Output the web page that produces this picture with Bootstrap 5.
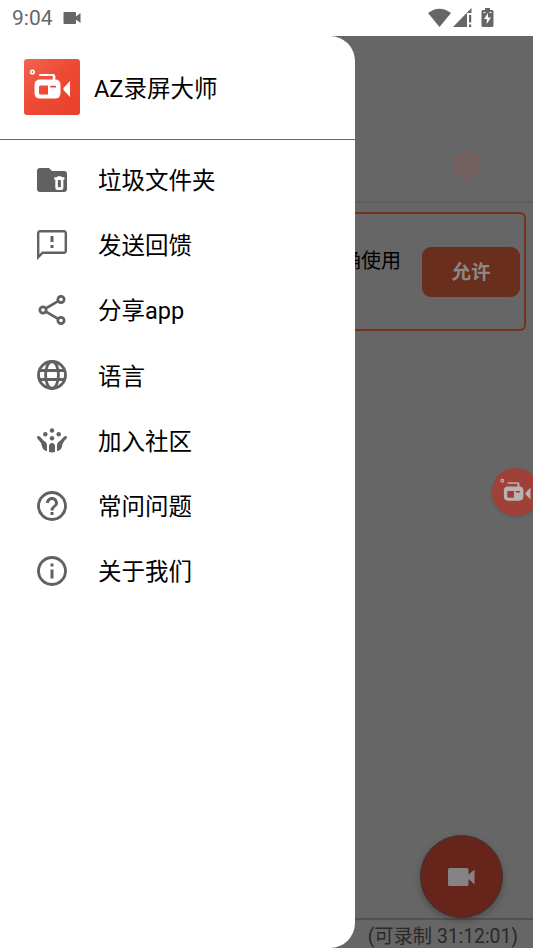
<!DOCTYPE html>
<html lang="zh-CN">
<head>
<meta charset="utf-8">
<meta name="viewport" content="width=device-width, initial-scale=1">
<title>AZ录屏大师</title>
<link href="https://cdn.jsdelivr.net/npm/bootstrap@5.3.0/dist/css/bootstrap.min.css" rel="stylesheet">
<style>
body{font-family:Roboto,"Noto Sans CJK SC",sans-serif;background:#fff;color:#000}
svg{display:block;flex:none}
.screen{height:948px}
.status{height:36px;padding:0 39px 0 12px;color:#666}
.clock{font-size:21px;line-height:38px;width:51px}
.backdrop-page{background:#666}
.topbar{height:167px;padding:112px 49px 0 0;border-bottom:2px solid #5f5f60}
.permit{height:119px;margin:9px 7px 0 12px;padding:0 4px 0 0;border:2px solid #75321e;border-radius:6px}
.permit-text{font-size:20px;line-height:28px;margin:-21px 21px 0 0}
.allow{width:98px;height:50px;border-radius:9px;background:#692e1c;color:#8b8887;font-size:19.5px;font-weight:700;padding:3px 0 0}
.remain{height:30px;border-top:2px solid #525252;color:#292929;font-size:19.3px;line-height:34px;padding-right:15px}
.fab{width:83px;height:83px;right:30px;bottom:30px;background:#66241b;border:1px solid #3d302e;box-shadow:0 3px 7px rgba(0,0,0,.25)}
.bubble{width:48px;height:48px;left:492px;top:432px;padding:3px 0 0 4px;background:#9f4138;box-shadow:0 1px 3px rgba(0,0,0,.15)}
.drawer{width:355px;top:36px;background:#fff;border-radius:0 25px 25px 0}
.brand{height:104px;padding:0 24px 2px;border-bottom:1px solid #666;gap:14px}
.brand-icon{width:56px;height:56px;border-radius:3px;background:linear-gradient(135deg,#f16452,#ed4933 50%,#e9402a)}
.brand-name{font-size:23.5px;line-height:34px;padding-top:4px}
.menu{padding-top:7px}
.entry{height:65.2px;padding:0 0 0 34px;gap:28px;font-size:23.5px;color:#000}
.entry span{padding-top:4px}
.entry svg{width:36px;height:36px;color:#616161}
</style>
</head>
<body>
<svg width="0" height="0" class="position-absolute" aria-hidden="true">
<symbol id="cam" viewBox="0 0 56 56"><circle cx="8.400" cy="13" r="1.800" fill="none" stroke="currentColor" stroke-width="1.600"/><g fill="currentColor"><path d="M15.300 15h14q2 0 2 2v4.500h-2.600V17H15.300z"/><path fill-rule="evenodd" d="M16 20.500h15q5.500 0 5.500 5.500v8q0 5.500-5.500 5.500H16q-5.500 0-5.500-5.500v-8q0-5.500 5.500-5.500zm.5 6q-1.500 0-1.500 1.500v6q0 1.500 1.500 1.500H24v-9zm9.700.3v1.700H32v-1.700z"/><path d="M39.500 29l6.500-7v16l-6.500-7z"/></g></symbol>
</svg>
<div class="screen position-relative overflow-hidden d-flex flex-column">
<header class="status d-flex align-items-center">
<span class="clock">9:04</span>
<svg width="18" height="12" viewBox="0 0 18 12" fill="currentColor"><path d="M1.500 0h10.500q1 0 1 1v3.500L17.500 1v10L13 7.500V11q0 1-1 1H1.500q-1 0-1-1V1q0-1 1-1z"/></svg>
<div class="ms-auto d-flex align-items-center">
<svg width="23" height="20" viewBox="0 0 23 20" fill="currentColor"><path d="M0 5Q11.500-3.500 23 5L11.500 19z"/></svg>
<svg width="20" height="20" viewBox="0 0 20 20" fill="currentColor" style="margin-left:2px"><path d="M0 19L18.500 0v5H14v14zM16 7h2.200v7.500H16zm0 9.500h2.200V19H16z"/></svg>
<svg width="13" height="20" viewBox="0 0 13 20" style="margin-left:8px"><path fill="currentColor" d="M4 0h5v2h2q1.500 0 1.500 1.500v14q0 1.500-1.500 1.500H2Q.5 19 .5 17.500v-14Q.5 2 2 2h2z"/><path fill="#fff" d="M7 5v4.500h3L5.800 16v-5H3z"/><path stroke="#fff" d="M2.500 4.500h2m4 0h2"/></svg>
</div>
</header>
<main class="backdrop-page flex-grow-1 position-relative d-flex flex-column overflow-hidden">
<div class="topbar d-flex justify-content-end">
<svg width="35" height="35" viewBox="0 0 24 24" fill="#7c5c5b"><path d="M19.430 12.980c.04-.32.070-.640.070-.980 0-.340-.030-.660-.070-.980l2.110-1.650c.190-.150.240-.420.120-.640l-2-3.460c-.090-.160-.260-.250-.440-.250-.060 0-.120.010-.170.030l-2.490 1c-.520-.400-1.080-.730-1.690-.980l-.380-2.650C14.460 2.180 14.250 2 14 2h-4c-.250 0-.460.180-.490.420l-.380 2.650c-.610.250-1.170.590-1.690.980l-2.490-1c-.060-.020-.120-.030-.180-.030-.170 0-.340.090-.430.250l-2 3.460c-.130.220-.070.490.120.640l2.110 1.650c-.040.320-.070.650-.070.980 0 .330.030.660.070.980l-2.110 1.650c-.190.150-.240.420-.120.640l2 3.460c.090.160.260.250.440.250.060 0 .120-.010.170-.030l2.490-1c.520.400 1.080.730 1.690.980l.380 2.650c.030.240.240.420.490.420h4c.250 0 .460-.180.490-.420l.380-2.650c.610-.250 1.170-.590 1.690-.980l2.490 1c.060.020.120.030.180.030.170 0 .340-.090.430-.250l2-3.460c.120-.220.070-.490-.120-.640l-2.110-1.650zm-1.980-1.710c.040.310.050.520.050.730 0 .210-.020.430-.050.730l-.140 1.130.890.700 1.080.840-.700 1.210-1.270-.510-1.040-.420-.900.680c-.430.320-.840.560-1.250.730l-1.060.430-.160 1.130-.200 1.350h-1.400l-.190-1.350-.160-1.130-1.060-.430c-.430-.180-.830-.410-1.230-.710l-.910-.700-1.060.430-1.270.510-.700-1.210 1.080-.840.890-.700-.140-1.130c-.030-.310-.050-.540-.050-.740s.020-.430.050-.730l.140-1.130-.890-.700-1.080-.840.700-1.210 1.270.510 1.040.420.900-.680c.430-.320.840-.560 1.250-.730l1.060-.430.160-1.130.200-1.350h1.390l.190 1.350.160 1.130 1.060.430c.430.180.830.410 1.230.710l.910.700 1.060-.430 1.270-.510.700 1.210-1.070.850-.890.700.140 1.130zM12 8c-2.210 0-4 1.790-4 4s1.790 4 4 4 4-1.790 4-4-1.790-4-4-4zm0 6c-1.100 0-2-.9-2-2s.9-2 2-2 2 .9 2 2-.9 2-2 2z"/></svg>
</div>
<section class="permit d-flex align-items-center justify-content-end">
<span class="permit-text">正确使用</span>
<button class="allow btn">允许</button>
</section>
<div class="remain mt-auto text-end">(可录制 31:12:01)</div>
<button class="fab position-absolute rounded-circle d-flex align-items-center justify-content-center p-0" aria-label="录制">
<svg width="27" height="18" viewBox="0 0 27 18" fill="#858383"><path d="M1.500 0H19q1.500 0 1.500 1.500v5.200L26.500 1.500v15L20.500 11v5.500Q20.500 18 19 18H1.500Q0 18 0 16.500v-15Q0 0 1.500 0z"/></svg>
</button>
<div class="bubble position-absolute rounded-circle">
<svg width="42" height="42" color="#b9b3b1"><use href="#cam"/></svg>
</div>
</main>
<aside class="drawer position-absolute start-0 bottom-0 d-flex flex-column">
<div class="brand d-flex align-items-center">
<div class="brand-icon text-white"><svg width="56" height="56"><use href="#cam"/></svg></div>
<span class="brand-name">AZ录屏大师</span>
</div>
<nav class="menu d-flex flex-column">
<a class="entry d-flex align-items-center text-decoration-none"><svg viewBox="0 0 24 24" fill="currentColor"><path fill-rule="evenodd" d="M10 4H4q-2 0-2 2v12q0 2 2 2h16q2 0 2-2V8q0-2-2-2h-8zm3.500 6.200h1.700l.6-.7h2.300l.6.7h1.600v1.500h-.7v5.500q0 1.500-1.500 1.500h-2.400q-1.500 0-1.500-1.500v-5.500h-.7zm2.400 1.800v4.800h2V12z"/></svg><span>垃圾文件夹</span></a>
<a class="entry d-flex align-items-center text-decoration-none"><svg viewBox="0 0 24 24" fill="currentColor"><path d="M20 2H4c-1.100 0-2 .9-2 2v18l4-4h14c1.100 0 2-.9 2-2V4c0-1.100-.9-2-2-2zm.4 14.400H5.400l-1.800 1.800V3.600h16.800zM11 12h2v2h-2zm0-6h2v4h-2z"/></svg><span>发送回馈</span></a>
<a class="entry d-flex align-items-center text-decoration-none"><svg viewBox="0 0 24 24" fill="none" stroke="currentColor" stroke-width="1.800"><circle cx="18" cy="5" r="2.100"/><circle cx="6" cy="12" r="2.100"/><circle cx="18" cy="19" r="2.100"/><path d="M7.900 10.900l8.200-4.800M7.900 13.100l8.200 4.800"/></svg><span>分享app</span></a>
<a class="entry d-flex align-items-center text-decoration-none"><svg viewBox="0 0 24 24" fill="none" stroke="currentColor" stroke-width="1.900"><circle cx="12" cy="12" r="9"/><ellipse cx="12" cy="12" rx="4.300" ry="9"/><path d="M3.500 9h17M3.500 15h17"/></svg><span>语言</span></a>
<a class="entry d-flex align-items-center text-decoration-none"><svg viewBox="0 0 36 36" fill="currentColor"><circle cx="18" cy="8.500" r="2.200"/><circle cx="11.300" cy="12.300" r="2.200"/><circle cx="24.700" cy="12.300" r="2.200"/><circle cx="18" cy="16.300" r="2.200"/><path d="M15 30v-5.500q0-3.500 3-3.500t3 3.500V30q-3 .8-6 0zM3.300 14.500q1.200-1.200 2.500.1l4 4.200q3.200 1.700 3.200 4.700v5.800Q8.500 28 8 24.500q-.4-4-4.400-7.700-1.200-1.300-.3-2.300zM32.700 14.500q-1.200-1.200-2.500.1l-4 4.200Q23 20.500 23 23.500v5.800q4.500-1.300 5-4.800.4-4 4.400-7.700 1.200-1.300.3-2.300z"/></svg><span>加入社区</span></a>
<a class="entry d-flex align-items-center text-decoration-none"><svg viewBox="0 0 24 24" fill="currentColor"><circle cx="12" cy="12" r="9" fill="none" stroke="currentColor" stroke-width="1.900"/><path d="M11 18h2v-2h-2zM12 6c-2.210 0-4 1.790-4 4h2c0-1.100.9-2 2-2s2 .9 2 2c0 2-3 1.750-3 5h2c0-2.250 3-2.500 3-5 0-2.210-1.790-4-4-4z"/></svg><span>常问问题</span></a>
<a class="entry d-flex align-items-center text-decoration-none"><svg viewBox="0 0 24 24" fill="currentColor"><path d="M11 7h2v2h-2zm0 4h2v6h-2z"/><circle cx="12" cy="12" r="9" fill="none" stroke="currentColor" stroke-width="1.900"/></svg><span>关于我们</span></a>
</nav>
</aside>
</div>
<script src="https://cdn.jsdelivr.net/npm/bootstrap@5.3.0/dist/js/bootstrap.bundle.min.js"></script>
</body>
</html>
